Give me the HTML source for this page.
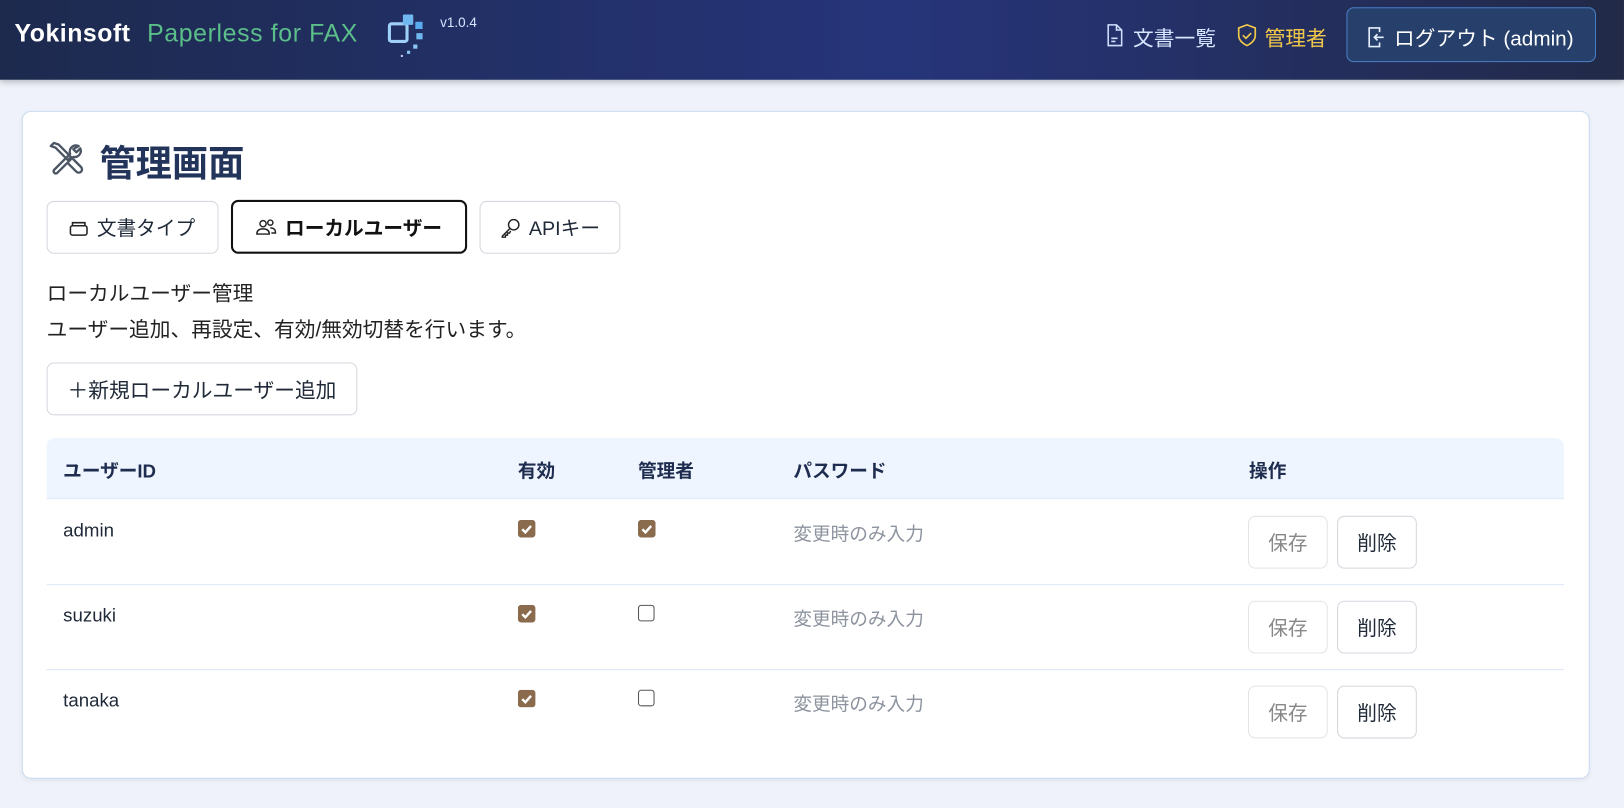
<!DOCTYPE html>
<html><head><meta charset="utf-8"><style>
*{box-sizing:border-box;margin:0;padding:0}
body{width:1624px;height:807px;background:#eff2fa;font-family:"Liberation Sans","Noto Sans CJK JP",sans-serif;color:#1f2937;position:relative;overflow:hidden}
#w{position:absolute;left:0;top:0;width:1568px;height:780px;transform:scale(1.0357);transform-origin:0 0}
.hdr{position:absolute;left:0;top:0;width:1568px;height:77px;background:linear-gradient(90deg,#1d2a4e 0%,#26347a 55%,#222a48 100%);box-shadow:0 2px 6px rgba(0,0,0,.25)}
.abs{position:absolute;white-space:nowrap}
.card{position:absolute;left:21px;top:107px;width:1514px;height:645px;background:#fff;border:1px solid #c9dbf1;border-radius:9px;box-shadow:0 2px 4px rgba(0,0,0,.05)}
.btn{position:absolute;border:1px solid #d4d7dd;border-radius:7px;background:#fff;font-size:19px;display:flex;align-items:center;justify-content:center;gap:8px;color:#1f2937}
.cb{position:absolute;width:16px;height:16px;border-radius:3px}
.off{border:1.5px solid #555;background:#fff}
.th{position:absolute;top:441px;font-weight:bold;font-size:18px;color:#1e2d4f}
.td{position:absolute;font-size:18px;color:#1f2937}
.ph{position:absolute;font-size:18px;color:#8c939e}
</style></head><body><div id="w">
<div class="hdr">
<div class="abs" style="left:14px;top:19px;font-size:24px;font-weight:bold;color:#fff;letter-spacing:0.5px">Yokinsoft</div>
<div class="abs" style="left:142px;top:19px;font-size:24px;color:#5bbf8a;letter-spacing:0.6px">Paperless for FAX</div>
<svg class="abs" style="left:372px;top:13px" width="44" height="42" viewBox="0 0 44 42"><rect x="4" y="10" width="17" height="17" rx="2" fill="none" stroke="#9fd0f5" stroke-width="3"/><rect x="17" y="1" width="10" height="10" rx="1" fill="#6fb8f0"/><rect x="29" y="8" width="7" height="7" fill="#5aaaf0"/><rect x="30" y="19" width="6" height="6" fill="#6fb8f0"/><rect x="27" y="30" width="4" height="4" fill="#8cc8f5"/><rect x="21" y="36" width="3" height="3" fill="#8cc8f5"/><rect x="15" y="40" width="2" height="2" fill="#cce"/></svg>
<div class="abs" style="left:425px;top:14px;font-size:13px;color:#d6e6ff">v1.0.4</div>
<svg class="abs" style="left:1068px;top:23px" width="16" height="22" viewBox="0 0 16 22" fill="none" stroke="#cfe0ff" stroke-width="1.5"><path d="M2 1h8l5 5v15H2z"/><path d="M10 1v5h5M5 14h6M5 17h4"/></svg>
<div class="abs" style="left:1094px;top:21px;font-size:20px;color:#d6e6ff">文書一覧</div>
<svg class="abs" style="left:1194px;top:23px" width="20" height="22" viewBox="0 0 20 22" fill="none" stroke="#f3c94a" stroke-width="1.6"><path d="M10 1l8 3v7c0 5-4 8-8 10-4-2-8-5-8-10V4z"/><path d="M6 11l3 3 5-5"/></svg>
<div class="abs" style="left:1221px;top:21px;font-size:20px;color:#f3c94a">管理者</div>
<div class="abs" style="left:1300px;top:7px;width:241px;height:53px;border:1px solid #4a7fc8;border-radius:7px;background:#263f6b"></div>
<svg class="abs" style="left:1320px;top:25px" width="18" height="22" viewBox="0 0 18 22" fill="none" stroke="#e6efff" stroke-width="1.6"><path d="M12 6V2H2v18h10v-4"/><path d="M16 11H7m3-3l-3 3 3 3"/></svg>
<div class="abs" style="left:1346px;top:21px;font-size:20px;color:#fff">ログアウト (admin)</div>
</div>

<div class="card"></div>
<svg class="abs" style="left:46px;top:135px" width="36" height="36" viewBox="0 0 24 24" fill="none" stroke="#4b5563" stroke-width="1.5" stroke-linecap="round" stroke-linejoin="round"><path d="M2 4l2-2 3 1 8 8-2 2-8-8z"/><path d="M13.5 15.5l5 5a2 2 0 0 0 3-3l-5-5"/><path d="M20 4a4 4 0 0 0-5.5 5L4 19.5a1.5 1.5 0 0 0 2 2L16.5 11A4 4 0 0 0 21 5.5l-2.5 2.5-2-2z"/></svg>
<div class="abs" style="left:96px;top:130px;font-size:35px;font-weight:bold;color:#22345a">管理画面</div>

<div class="btn" style="left:45px;top:194px;width:166px;height:51px"><svg width="18" height="16" viewBox="0 0 18 16" fill="none" stroke="#222" stroke-width="1.5"><rect x="1" y="6" width="16" height="9" rx="2"/><path d="M3 6V3h12v3"/></svg>文書タイプ</div>
<div class="btn" style="left:223px;top:193px;width:228px;height:52px;border:2px solid #111;font-weight:bold;color:#111"><svg width="20" height="18" viewBox="0 0 20 18" fill="none" stroke="#222" stroke-width="1.4"><circle cx="7" cy="6" r="3"/><path d="M1 16c0-4 3-5 6-5s6 1 6 5z"/><circle cx="14" cy="5" r="2.5"/><path d="M14 10c3 0 5 1 5 5h-4"/></svg>ローカルユーザー</div>
<div class="btn" style="left:463px;top:194px;width:136px;height:51px"><svg width="20" height="20" viewBox="0 0 20 20" fill="none" stroke="#222" stroke-width="1.4"><circle cx="13" cy="7" r="5"/><path d="M9 11l-7 7v1h3v-2h2v-2h2l1-2"/></svg>APIキー</div>

<div class="abs" style="left:45px;top:267px;font-size:20px;color:#222">ローカルユーザー管理</div>
<div class="abs" style="left:45px;top:302px;font-size:20px;color:#222">ユーザー追加、再設定、有効/無効切替を行います。</div>
<div class="btn" style="left:45px;top:350px;width:300px;height:51px;font-size:20px">＋新規ローカルユーザー追加</div>

<div class="abs" style="left:45px;top:423px;width:1465px;height:59px;background:#eff5fe;border-radius:8px 8px 0 0;border-bottom:1px solid #dbe7f7"></div>
<div class="abs" style="left:45px;top:564px;width:1465px;height:1px;background:#dbe7f7"></div>
<div class="abs" style="left:45px;top:646px;width:1465px;height:1px;background:#dbe7f7"></div>
<div class="th" style="left:61px">ユーザーID</div>
<div class="th" style="left:500px">有効</div>
<div class="th" style="left:616px">管理者</div>
<div class="th" style="left:766px">パスワード</div>
<div class="th" style="left:1206px">操作</div>

<div class="td" style="left:61px;top:502px">admin</div>
<div class="td" style="left:61px;top:584px">suzuki</div>
<div class="td" style="left:61px;top:666px">tanaka</div>

<svg width="0" height="0" style="position:absolute"><defs><symbol id="ck" viewBox="0 0 16 16"><rect width="16" height="16" rx="3" fill="#8b6b4d"/><path d="M4 8.5l2.8 2.8L12 5.5" stroke="#fff" stroke-width="2.2" fill="none"/></symbol></defs></svg>
<svg class="abs" style="left:500px;top:502px" width="17" height="17"><use href="#ck"/></svg>
<svg class="abs" style="left:616px;top:502px" width="17" height="17"><use href="#ck"/></svg>
<svg class="abs" style="left:500px;top:584px" width="17" height="17"><use href="#ck"/></svg>
<div class="cb off" style="left:616px;top:584px"></div>
<svg class="abs" style="left:500px;top:666px" width="17" height="17"><use href="#ck"/></svg>
<div class="cb off" style="left:616px;top:666px"></div>

<div class="ph" style="left:766px;top:502px">変更時のみ入力</div>
<div class="ph" style="left:766px;top:584px">変更時のみ入力</div>
<div class="ph" style="left:766px;top:666px">変更時のみ入力</div>

<div class="btn" style="left:1205px;top:498px;width:77px;height:51px;color:#888;border-color:#e2e4e8">保存</div>
<div class="btn" style="left:1291px;top:498px;width:77px;height:51px">削除</div>
<div class="btn" style="left:1205px;top:580px;width:77px;height:51px;color:#888;border-color:#e2e4e8">保存</div>
<div class="btn" style="left:1291px;top:580px;width:77px;height:51px">削除</div>
<div class="btn" style="left:1205px;top:662px;width:77px;height:51px;color:#888;border-color:#e2e4e8">保存</div>
<div class="btn" style="left:1291px;top:662px;width:77px;height:51px">削除</div>
</div></body></html>
